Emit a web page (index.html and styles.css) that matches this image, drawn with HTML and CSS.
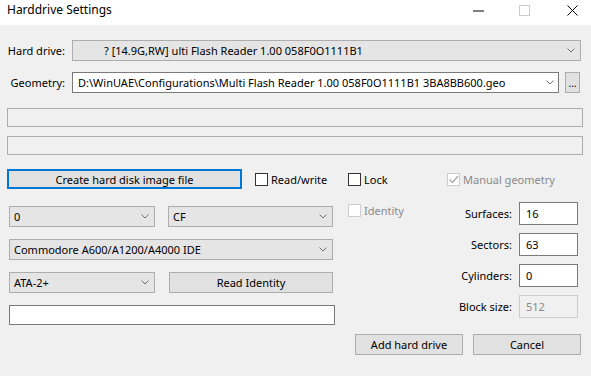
FILE: index.html
```html
<!DOCTYPE html>
<html lang="en">
<head>
  <meta charset="UTF-8">
  <title>Harddrive Settings</title>
  <link rel="stylesheet" href="styles.css">
</head>
<body>
  <div class="titlebar">
    <div class="title">Harddrive Settings</div>
    <div class="controls">
      <span class="ctl min"><svg width="11" height="2"><line x1="0" y1="1" x2="11" y2="1" stroke="#000" stroke-width="1"/></svg></span>
      <span class="ctl max"><svg width="11" height="11"><rect x="0.5" y="0.5" width="10" height="10" fill="none" stroke="#cccccc"/></svg></span>
      <span class="ctl close"><svg width="11" height="11"><path d="M0.5 0.5 L10.5 10.5 M10.5 0.5 L0.5 10.5" stroke="#000" stroke-width="1" fill="none"/></svg></span>
    </div>
  </div>

  <div class="dialog">
    <div class="row hd-row">
      <label class="lbl">Hard drive:</label>
      <div class="combo grey hd-combo">
        <span class="value hd-value">? [14.9G,RW] ulti Flash Reader 1.00 058F0O1111B1</span>
        <svg class="chev" width="8" height="5"><path d="M0.5 0.5 L4 4 L7.5 0.5" stroke="#707070" fill="none"/></svg>
      </div>
    </div>

    <div class="row geo-row">
      <label class="lbl">Geometry:</label>
      <div class="combo edit geo-combo">
        <span class="value">D:\WinUAE\Configurations\Multi Flash Reader 1.00 058F0O1111B1 3BA8BB600.geo</span>
        <svg class="chev" width="8" height="5"><path d="M0.5 0.5 L4 4 L7.5 0.5" stroke="#707070" fill="none"/></svg>
      </div>
      <button class="btn dots">...</button>
    </div>

    <div class="bar bar-first"></div>
    <div class="bar"></div>

    <div class="row create-row">
      <button class="btn create">Create hard disk image file</button>
      <div class="check rw"><span class="box"></span>Read/write</div>
      <div class="check lock"><span class="box"></span>Lock</div>
      <div class="check disabled"><span class="box"><svg width="11" height="11"><path d="M1.5 5.5 L4.5 8.5 L10 2" stroke="#a8a8a8" stroke-width="1.2" fill="none"/></svg></span>Manual geometry</div>
    </div>

    <div class="lower">
      <div class="left-col">
        <div class="row">
          <div class="combo grey small"><span class="value">0</span><svg class="chev" width="8" height="5"><path d="M0.5 0.5 L4 4 L7.5 0.5" stroke="#707070" fill="none"/></svg></div>
          <div class="combo grey medium"><span class="value">CF</span><svg class="chev" width="8" height="5"><path d="M0.5 0.5 L4 4 L7.5 0.5" stroke="#707070" fill="none"/></svg></div>
        </div>
        <div class="row">
          <div class="combo grey wide"><span class="value">Commodore A600/A1200/A4000 IDE</span><svg class="chev" width="8" height="5"><path d="M0.5 0.5 L4 4 L7.5 0.5" stroke="#707070" fill="none"/></svg></div>
        </div>
        <div class="row">
          <div class="combo grey small"><span class="value">ATA-2+</span><svg class="chev" width="8" height="5"><path d="M0.5 0.5 L4 4 L7.5 0.5" stroke="#707070" fill="none"/></svg></div>
          <button class="btn identity-btn">Read Identity</button>
        </div>
        <div class="row">
          <div class="field long"></div>
        </div>
      </div>

      <div class="mid-col">
        <div class="check disabled"><span class="box"></span>Identity</div>
      </div>

      <div class="geom">
        <label class="glbl">Surfaces:</label><div class="field num">16</div>
        <label class="glbl">Sectors:</label><div class="field num">63</div>
        <label class="glbl">Cylinders:</label><div class="field num">0</div>
        <label class="glbl">Block size:</label><div class="field num off">512</div>
      </div>
    </div>

    <div class="row actions">
      <button class="btn action">Add hard drive</button>
      <button class="btn action">Cancel</button>
    </div>
  </div>
</body>
</html>
```

FILE: styles.css
```css
body {
  margin: 0;
  background-color: #f0f0f0;
  font-family: "Noto Sans", "DejaVu Sans", sans-serif;
  font-size: 11px;
  color: #000;
  overflow: hidden;
}

.titlebar {
  display: flex;
  justify-content: space-between;
  height: 25px;
  background-color: #fff;
}

.title {
  padding: 2px 0 0 7px;
  line-height: 16px;
  font-size: 12px;
}

.controls {
  display: flex;
}

.ctl {
  display: flex;
  align-items: center;
  justify-content: center;
  height: 21px;
}

.ctl.min { width: 46px; }
.ctl.max { width: 47px; }
.ctl.close {
  width: 43px;
  justify-content: flex-start;
  padding-left: 19px;
  box-sizing: border-box;
}

.row {
  display: flex;
  align-items: center;
}

.lbl {
  width: 58px;
  text-align: right;
  margin-right: 7px;
  white-space: nowrap;
}

.hd-row {
  margin: 15px 10px 0 7px;
}

.geo-row {
  margin: 11px 11px 0 7px;
}

.combo {
  display: flex;
  align-items: center;
  justify-content: space-between;
  height: 21px;
  box-sizing: border-box;
  padding: 0 5px 0 4px;
  white-space: nowrap;
  overflow: hidden;
}

.combo.grey {
  background-color: #e5e5e5;
  border: 1px solid #adadad;
}

.combo.edit {
  background-color: #fff;
  border: 1px solid #7a7a7a;
  padding: 0 4px 0 5px;
}

.hd-combo, .geo-combo {
  flex: 1;
}

.hd-value {
  padding-left: 27px;
}

.chev {
  flex: none;
}

.btn {
  font-family: inherit;
  font-size: 11px;
  color: #000;
  background-color: #e1e1e1;
  border: 1px solid #adadad;
  height: 21px;
  padding: 0;
  box-sizing: border-box;
}

.dots {
  width: 15px;
  margin-left: 6px;
  font-size: 10px;
  line-height: 1;
}

.bar {
  height: 19px;
  margin: 9px 8px 0 7px;
  border: 1px solid #adadad;
  box-sizing: border-box;
}

.bar-first {
  margin-top: 15px;
}

.create-row {
  margin: 14px 0 0 7px;
}

.create {
  width: 235px;
  height: 20px;
  border: 2px solid #0078d7;
}

.check {
  display: flex;
  align-items: center;
  white-space: nowrap;
}

.check .box {
  width: 13px;
  height: 13px;
  box-sizing: border-box;
  border: 1px solid #333;
  background-color: #fff;
  margin-right: 3px;
  display: flex;
  align-items: center;
  justify-content: center;
}

.check.rw {
  width: 93px;
  margin-left: 13px;
}

.check.lock {
  width: 99px;
}

.check.disabled {
  color: #8a8a8a;
}

.check.disabled .box {
  border-color: #cccccc;
}

.lower {
  display: flex;
  margin: 13px 13px 0 9px;
}

.left-col {
  width: 326px;
  padding-top: 4px;
}

.left-col .row {
  gap: 13px;
  margin-bottom: 12px;
}

.left-col .row:last-child {
  margin-bottom: 0;
}

.combo.small { width: 146px; }
.combo.medium { width: 165px; }
.combo.wide { width: 324px; }

.identity-btn {
  width: 164px;
  margin-left: 1px;
}

.field {
  background-color: #fff;
  border: 1px solid #7a7a7a;
  box-sizing: border-box;
}

.field.long {
  width: 326px;
  height: 20px;
}

.mid-col {
  flex: 1;
  padding: 1px 0 0 13px;
}

.geom {
  display: grid;
  grid-template-columns: auto 59px;
  grid-auto-rows: 23px;
  column-gap: 7px;
  row-gap: 8px;
  align-items: center;
}

.glbl {
  text-align: right;
}

.field.num {
  height: 23px;
  padding: 3px 0 0 6px;
}

.field.num.off {
  background-color: #f0f0f0;
  border-color: #cccccc;
  color: #8a8a8a;
}

.actions {
  justify-content: flex-end;
  gap: 10px;
  margin: 9px 10px 0 0;
}

.action {
  width: 108px;
}
```
